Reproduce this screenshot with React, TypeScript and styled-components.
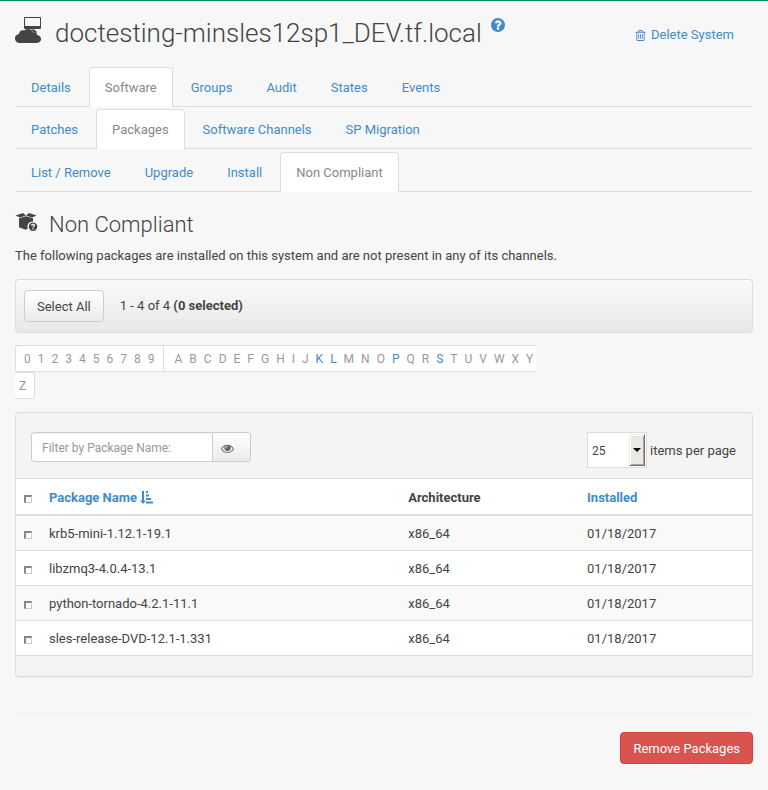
import React from "react";
import styled, { createGlobalStyle, css } from "styled-components";

const link = "#428bca";
const line = "#dddddd";

const GlobalStyle = createGlobalStyle`
  *, *::before, *::after { box-sizing: border-box; }
  body {
    margin: 0;
    background: #f7f7f7;
    color: #444444;
    font: 13px/18px Roboto, "Liberation Sans", sans-serif;
  }
  button, input, select { font: inherit; color: inherit; margin: 0; }
  a { color: ${link}; text-decoration: none; }
`;

const Page = styled.main`
  border-top: 1px solid #018c5f;
  padding: 12px 15px 26px;
`;

const Header = styled.header`
  display: flex;
  justify-content: space-between;
  align-items: flex-start;
  height: 54px;
`;

const Title = styled.h1`
  display: flex;
  align-items: flex-start;
  margin: 0;
  font-size: 26px;
  line-height: 40px;
  font-weight: 300;
`;

const TitleIcon = styled.svg`
  width: 28px;
  height: 28px;
  margin: 3px 12px 0 0;
  fill: #444444;
`;

const HelpLink = styled.a`
  display: flex;
  margin: 5px 0 0 9px;
`;

const Icon = styled.svg<{ $size: number }>`
  width: ${(p) => p.$size}px;
  height: ${(p) => p.$size}px;
  fill: currentColor;
  flex: none;
`;

const DeleteLink = styled.a`
  display: flex;
  align-items: center;
  gap: 5px;
  margin: 13px 19px 0 0;
`;

const Tabs = styled.nav`
  display: flex;
  gap: 2px;
  height: 40px;
  margin-bottom: 2px;
  border-bottom: 1px solid ${line};
  & + & + & { margin-top: 3px; }
`;

const Tab = styled.a<{ $active?: boolean }>`
  height: 40px;
  padding: 11px 15px 10px;
  border: 1px solid transparent;
  border-bottom: 0;
  border-radius: 4px 4px 0 0;
  ${(p) =>
    p.$active &&
    css`
      background: #ffffff;
      border-color: ${line};
      color: #888888;
    `}
`;

const SectionTitle = styled.h2`
  display: flex;
  margin: 18px 0 7px;
  font-size: 22px;
  line-height: 30px;
  font-weight: 300;
`;

const SectionIcon = styled.svg`
  width: 23px;
  height: 20px;
  margin: 2px 11px 0 0;
  fill: #444444;
`;

const Intro = styled.p`
  margin: 0 0 14px;
`;

const SelectionBar = styled.div`
  display: flex;
  align-items: center;
  gap: 16px;
  height: 54px;
  padding: 0 8px;
  border: 1px solid ${line};
  border-radius: 4px;
  background: linear-gradient(#fafafa, #e8e8e8);
`;

const Button = styled.button<{ $danger?: boolean }>`
  height: 32px;
  padding: 1px 12px 0;
  border: 1px solid ${(p) => (p.$danger ? "#d43f3a" : "#cccccc")};
  border-radius: 4px;
  background: ${(p) => (p.$danger ? "#d9534f" : "linear-gradient(#ffffff, #ebebeb)")};
  color: ${(p) => (p.$danger ? "#ffffff" : "#444444")};
`;

const AlphaBar = styled.nav`
  display: flex;
  flex-wrap: wrap;
  width: 72%;
  margin: 12px 0 13px;
  color: #999999;
  font-size: 12px;
`;

const Letter = styled.span<{ $start?: boolean; $end?: boolean }>`
  height: 27px;
  padding: 4px ${(p) => (p.$end ? 8 : 3)}px 0 ${(p) => (p.$start ? 8 : 4)}px;
  border: solid ${line};
  border-width: 1px ${(p) => (p.$end ? 1 : 0)}px 1px ${(p) => (p.$start ? 1 : 0)}px;
  border-radius: ${(p) => (p.$start ? "3px 0 0 3px" : p.$end ? "0 3px 3px 0" : "0")};
  background: #ffffff;
`;

const Divider = styled.span`
  width: 13px;
  border: solid ${line};
  border-width: 1px 0;
  background: linear-gradient(${line}, ${line}) 5px 0 / 1px 100% no-repeat #ffffff;
`;

const Panel = styled.section`
  overflow: hidden;
  border: 1px solid ${line};
  border-radius: 4px;
  background: #f4f4f4;
  box-shadow: 0 1px 1px rgba(0, 0, 0, 0.05);
`;

const PanelHead = styled.div`
  display: flex;
  justify-content: space-between;
  align-items: flex-start;
  height: 66px;
  padding: 19px 16px 0 15px;
  border-bottom: 1px solid ${line};
`;

const FilterGroup = styled.form`
  display: flex;
`;

const FilterInput = styled.input`
  width: 182px;
  height: 30px;
  padding: 2px 10px 0;
  border: 1px solid #cccccc;
  border-radius: 3px 0 0 3px;
  background: #ffffff;
  box-shadow: inset 0 1px 1px rgba(0, 0, 0, 0.075);
  font-size: 12px;
  &::placeholder { color: #999999; }
`;

const FilterButton = styled.button`
  display: flex;
  align-items: center;
  height: 30px;
  width: 39px;
  margin-left: -1px;
  padding: 2px 9px 0;
  border: 1px solid #cccccc;
  border-radius: 0 3px 3px 0;
  background: linear-gradient(#ffffff, #ebebeb);
  color: #666666;
`;

const PageSize = styled.div`
  display: flex;
  gap: 3px;
`;

const PageSizeLabel = styled.label`
  padding-top: 10px;
`;

const SelectBox = styled.span`
  position: relative;
  display: flex;
`;

const Select = styled.select`
  appearance: none;
  width: 60px;
  height: 36px;
  padding: 2px 20px 0 4px;
  border: 1px solid ${line};
  border-radius: 0;
  background: #ffffff;
  font-size: 12px;
`;

const SelectArrow = styled.span`
  position: absolute;
  top: 2px;
  right: 2px;
  bottom: 2px;
  width: 16px;
  display: flex;
  align-items: center;
  justify-content: center;
  border: 1px solid;
  border-color: #efebe7 #716d67 #716d67 #efebe7;
  background: #ebe9e3;
  box-shadow: inset 1px 1px #ffffff, inset -1px -1px #aca8a0;
  pointer-events: none;
`;

const Table = styled.table`
  width: 100%;
  border-collapse: separate;
  border-spacing: 0;
  table-layout: fixed;
  background: #ffffff;
`;

const Row = styled.tr`
  &:nth-child(odd) { background: #f9f9f9; }
`;

const Cell = styled.td`
  height: 35px;
  padding: 9px 8px 7px;
  border-bottom: 1px solid ${line};
`;

const HeadCell = styled.th<{ $width?: string }>`
  width: ${(p) => p.$width ?? "auto"};
  height: 37px;
  padding: 9px 8px 7px;
  border-bottom: 2px solid ${line};
  background: #ffffff;
  text-align: left;
  font-weight: 700;
`;

const SortLink = styled.a`
  display: flex;
  align-items: center;
  gap: 3px;
  height: 16px;
`;

const Check = styled.input`
  appearance: none;
  display: block;
  width: 8px;
  height: 8px;
  margin-top: 2px;
  border: solid;
  border-width: 2px 1px 1px 2px;
  border-color: #888680 #cfccc6 #cfccc6 #888680;
  background: #ffffff;
  &:checked { background: #444444; }
`;

const PanelFoot = styled.div`
  height: 20px;
`;

const Actions = styled.footer`
  display: flex;
  justify-content: flex-end;
  margin-top: 36px;
  padding-top: 18px;
  border-top: 1px solid #eeeeee;
`;

const paths = {
  trash:
    "M704 736v576q0 14-9 23t-23 9h-64q-14 0-23-9t-9-23v-576q0-14 9-23t23-9h64q14 0 23 9t9 23zm256 0v576q0 14-9 23t-23 9h-64q-14 0-23-9t-9-23v-576q0-14 9-23t23-9h64q14 0 23 9t9 23zm256 0v576q0 14-9 23t-23 9h-64q-14 0-23-9t-9-23v-576q0-14 9-23t23-9h64q14 0 23 9t9 23zm128 724v-948h-896v948q0 22 7 40.5t14.5 27 10.5 8.5h832q3 0 10.5-8.5t14.5-27 7-40.5zm-672-1076h448l-48-117q-7-9-17-11h-317q-10 2-17 11zm928 32v64q0 14-9 23t-23 9h-96v948q0 83-47 143.5t-113 60.5h-832q-66 0-113-58.5t-47-141.5v-952h-96q-14 0-23-9t-9-23v-64q0-14 9-23t23-9h309l70-167q15-37 54-63t79-26h320q40 0 79 26t54 63l70 167h309q14 0 23 9t9 23z",
  eye: "M1664 960q-152-236-381-353 61 104 61 225 0 185-131.5 316.5t-316.5 131.5-316.5-131.5-131.5-316.5q0-121 61-225-229 117-381 353 133 205 333.5 326.5t434.5 121.5 434.5-121.5 333.5-326.5zm-720-384q0-20-14-34t-34-14q-125 0-214.5 89.5t-89.5 214.5q0 20 14 34t34 14 34-14 14-34q0-86 61-147t147-61q20 0 34-14t14-34zm848 384q0 34-20 69-140 230-376.5 368.5t-499.5 138.5-499.5-139-376.5-368q-20-35-20-69t20-69q140-229 376.5-368t499.5-139 499.5 139 376.5 368q20 35 20 69z",
  question:
    "M1024 1376v-192q0-14-9-23t-23-9h-192q-14 0-23 9t-9 23v192q0 14 9 23t23 9h192q14 0 23-9t9-23zm256-672q0-88-55.5-163t-138.5-116-170-41q-243 0-371 213-15 24 8 42l132 100q7 6 19 6 16 0 25-12 53-68 86-92 34-24 86-24 48 0 85.5 26t37.5 59q0 38-20 61t-68 45q-63 28-115.5 86.5t-52.5 125.5v36q0 14 9 23t23 9h192q14 0 23-9t9-23q0-19 21.5-49.5t54.5-49.5q32-18 49-28.5t46-35 44.5-48 28-60.5 12.5-81zm384 192q0 209-103 385.5t-279.5 279.5-385.5 103-385.5-103-279.5-279.5-103-385.5 103-385.5 279.5-279.5 385.5-103 385.5 103 279.5 279.5 103 385.5z",
};

const Glyph = ({ name, size }: { name: keyof typeof paths; size: number }) => (
  <Icon $size={size} viewBox="128 128 1536 1536" overflow="visible" aria-hidden="true">
    <path d={paths[name]} />
  </Icon>
);

const tabRows = [
  { label: "System", active: "Software", items: ["Details", "Software", "Groups", "Audit", "States", "Events"] },
  { label: "Software", active: "Packages", items: ["Patches", "Packages", "Software Channels", "SP Migration"] },
  { label: "Packages", active: "Non Compliant", items: ["List / Remove", "Upgrade", "Install", "Non Compliant"] },
];

const digits = "0123456789".split("");
const letters = "ABCDEFGHIJKLMNOPQRSTUVWXYZ".split("");
const linked = ["K", "L", "P", "S"];

const packages = ["krb5-mini-1.12.1-19.1", "libzmq3-4.0.4-13.1", "python-tornado-4.2.1-11.1", "sles-release-DVD-12.1-1.331"];

export default function App() {
  return (
    <>
      <GlobalStyle />
      <Page>
        <Header>
          <Title>
            <TitleIcon viewBox="0 0 28 28" aria-hidden="true">
              <path
                fillRule="evenodd"
                d="M10 1h15q1 0 1 1v10q0 1-1 1H10q-1 0-1-1V2q0-1 1-1zM10 2v8h15V2z"
              />
              <path d="M5 27C-1 27-2 19 4 18c0-3 3-4.500 5-3.500C12 11.500 17 13 18 16.500c2-.8 4 .3 4 2.500 5.500.5 5.500 8-.5 8z" />
              <path d="M16 13.500h4V15h1.500v2.500l-2-1.300q-1 .1-1.200-.2Q17.500 14.800 16 14z" />
            </TitleIcon>
            doctesting-minsles12sp1_DEV.tf.local
            <HelpLink href="#help" aria-label="Help">
              <Glyph name="question" size={14} />
            </HelpLink>
          </Title>
          <DeleteLink href="#delete">
            <Glyph name="trash" size={11} />
            Delete System
          </DeleteLink>
        </Header>

        {tabRows.map((row) => (
          <Tabs key={row.label} aria-label={row.label}>
            {row.items.map((item) => (
              <Tab key={item} href="#tab" $active={item === row.active} aria-current={item === row.active ? "page" : undefined}>
                {item}
              </Tab>
            ))}
          </Tabs>
        ))}

        <SectionTitle>
          <SectionIcon viewBox="0 0 23 20" aria-hidden="true">
            <path d="M.5 3.500L8 1l3 2.500L5 5.500zM21.500 3.500L14 1l-3 2.500 6 2zM4 6.300L11 4.300l7 2v3.200a5 5 0 0 0-5.200 7L10.500 17.800 4 15.300z" />
            <path
              fillRule="evenodd"
              d="M18 10.500a4.200 4.200 0 1 1 0 8.400 4.200 4.200 0 0 1 0-8.400zM15.900 13.600h1.400c.1-.9 1.500-.7 1.300.1-.2.500-1.200.8-1.200 1.700h1.300c0-.6 1.300-.9 1.300-2 0-2.200-4-2.300-4.100.2zM17.400 16.200v1.300h1.300v-1.300z"
            />
          </SectionIcon>
          Non Compliant
        </SectionTitle>
        <Intro>The following packages are installed on this system and are not present in any of its channels.</Intro>

        <SelectionBar>
          <Button type="button">Select All</Button>
          <span>
            1 - 4 of 4 <strong>(0 selected)</strong>
          </span>
        </SelectionBar>

        <AlphaBar aria-label="Jump to package">
          {digits.map((d, i) => (
            <Letter key={d} $start={i === 0}>
              {d}
            </Letter>
          ))}
          <Divider />
          {letters.map((l) => (
            <Letter key={l} $end={l === "Z"}>
              {linked.includes(l) ? <a href={`#${l}`}>{l}</a> : l}
            </Letter>
          ))}
        </AlphaBar>

        <Panel>
          <PanelHead>
            <FilterGroup onSubmit={(e) => e.preventDefault()}>
              <FilterInput type="text" aria-label="Filter by Package Name" placeholder="Filter by Package Name:" />
              <FilterButton type="submit" aria-label="Filter">
                <Glyph name="eye" size={11} />
              </FilterButton>
            </FilterGroup>
            <PageSize>
              <SelectBox>
                <Select id="page-size" defaultValue="25">
                  <option>25</option>
                  <option>50</option>
                  <option>100</option>
                </Select>
                <SelectArrow>
                  <svg width="8" height="4" viewBox="0 0 8 4" aria-hidden="true">
                    <path d="M0 0h8L4 4z" fill="#000000" />
                  </svg>
                </SelectArrow>
              </SelectBox>
              <PageSizeLabel htmlFor="page-size">items per page</PageSizeLabel>
            </PageSize>
          </PanelHead>
          <Table>
            <thead>
              <tr>
                <HeadCell $width="25px">
                  <Check type="checkbox" aria-label="Select all packages" />
                </HeadCell>
                <HeadCell>
                  <SortLink href="#name">
                    Package Name
                    <Icon $size={13} viewBox="0 0 13 13" aria-hidden="true">
                      <path d="M2 0h2v9.500h2L3 13 0 9.500h2zM6 0h2v2H6zM6 3.500h3v2H6zM6 7h5v2H6zM6 10.500h7v2H6z" />
                    </Icon>
                  </SortLink>
                </HeadCell>
                <HeadCell $width="24.3%">Architecture</HeadCell>
                <HeadCell $width="23.5%">
                  <a href="#installed">Installed</a>
                </HeadCell>
              </tr>
            </thead>
            <tbody>
              {packages.map((name) => (
                <Row key={name}>
                  <Cell>
                    <Check type="checkbox" aria-label={`Select ${name}`} />
                  </Cell>
                  <Cell>{name}</Cell>
                  <Cell>x86_64</Cell>
                  <Cell>01/18/2017</Cell>
                </Row>
              ))}
            </tbody>
          </Table>
          <PanelFoot />
        </Panel>

        <Actions>
          <Button type="button" $danger>
            Remove Packages
          </Button>
        </Actions>
      </Page>
    </>
  );
}
